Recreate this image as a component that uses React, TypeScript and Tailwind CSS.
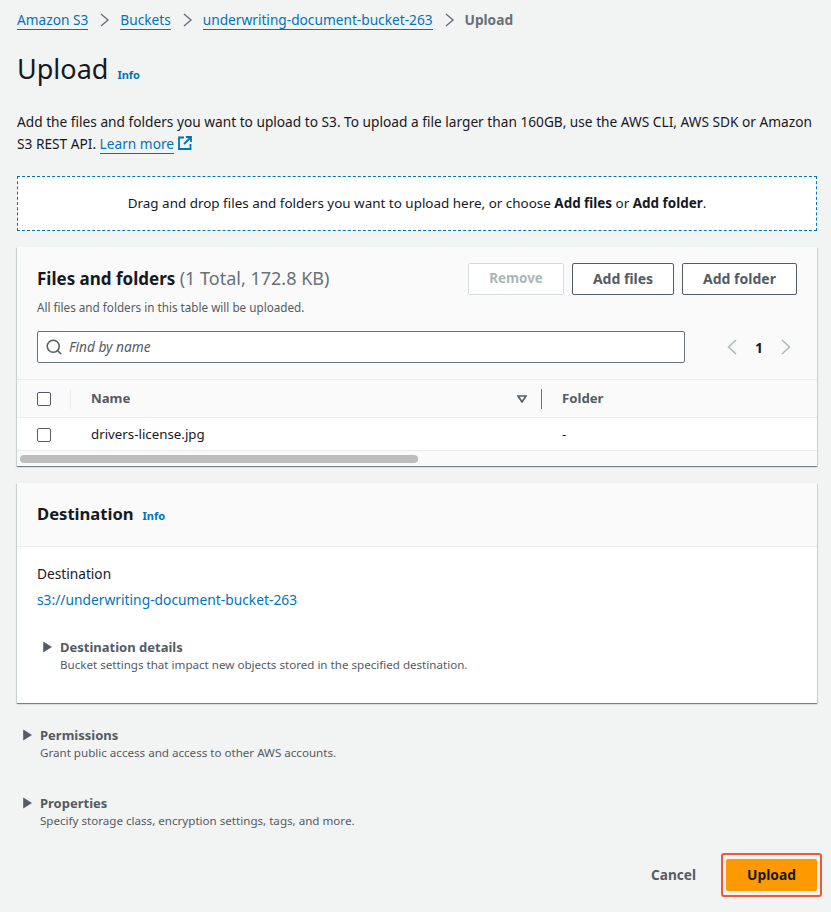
import { Search } from 'lucide-react';

const Chevron = ({ left, className }: { left?: boolean; className: string }) => (
  <svg width="10" height="16" viewBox="0 0 10 16" fill="none" stroke="currentColor" strokeWidth="1.4" className={`shrink-0 ${className}`}>
    <path d={left ? 'M9 1 L1.5 8 L9 15' : 'M1 1 L8.5 8 L1 15'} />
  </svg>
);

const Crumb = ({ label }: { label: string }) => (
  <>
    <a className="border-b border-[#0073bb] leading-[18px] text-[#0073bb]">{label}</a>
    <svg width="10" height="14" viewBox="0 0 10 14" fill="none" stroke="#687078" strokeWidth="1.4" className="ml-[2px] shrink-0">
      <path d="M1 1 L8 7 L1 13" />
    </svg>
  </>
);

const Caret = () => (
  <svg width="10" height="12" viewBox="0 0 10 12" className="shrink-0 fill-[#545b64]">
    <path d="M0.5 1 L8.5 6 L0.5 11 Z" stroke="#545b64" strokeWidth="0.6" strokeLinejoin="round" />
  </svg>
);

const Disclosure = ({ title, text }: { title: string; text: string }) => (
  <div className="flex items-start">
    <div className="flex h-[20px] w-[17px] items-center">
      <Caret />
    </div>
    <div>
      <div className="text-[13px] font-bold leading-[20px] text-[#545b64]">{title}</div>
      <div className="text-[11.6px] leading-[16px] text-[#545b64]">{text}</div>
    </div>
  </div>
);

const Checkbox = () => <div className="h-[14px] w-[14px] rounded-[2px] border border-[#545b64] bg-white" />;

const OutlineButton = ({ label, width }: { label: string; width: string }) => (
  <button className={`h-[32px] rounded-[2px] border border-[#545b64] bg-white pb-[2px] text-[14px] font-bold text-[#545b64] ${width}`}>
    {label}
  </button>
);

const App = () => {
  return (
    <div className="h-[912px] w-[831px] overflow-hidden bg-[#f2f3f3] px-[17px] pt-[11px] font-['Noto_Sans',sans-serif] text-[13.7px] text-[#16191f]">
      {/* breadcrumb */}
      <div className="flex h-[18px] items-center gap-[10px] text-[13.7px]">
        <Crumb label="Amazon S3" />
        <Crumb label="Buckets" />
        <Crumb label="underwriting-document-bucket-263" />
        <span className="font-bold text-[#687078]">Upload</span>
      </div>

      <div className="mt-[20px] flex items-baseline gap-[9px]">
        <h1 className="text-[27px] leading-[40px]">Upload</h1>
        <a className="text-[11px] font-bold text-[#0073bb]">Info</a>
      </div>

      <p className="mt-[22px] w-[800px] leading-[22px]">
        Add the files and folders you want to upload to S3. To upload a file larger than 160GB, use the AWS CLI, AWS SDK or Amazon S3 REST API.{' '}
        <a className="border-b border-[#0073bb] text-[#0073bb]">Learn more</a>
        <svg width="14" height="14" viewBox="0 0 14 14" fill="none" stroke="#0073bb" strokeWidth="1.8" className="ml-[4px] inline-block align-[-1px]">
          <path d="M6 1.5 H1 V13 H12.5 V8" />
          <path d="M8 1 H13 V6 M13 1 L6 8" />
        </svg>
      </p>

      <div className="mt-[21px] flex h-[55px] w-[800px] items-center justify-center border border-dashed border-[#0073bb] bg-white text-[13.45px]">
        <span>
          Drag and drop files and folders you want to upload here, or choose <b>Add files</b> or <b>Add folder</b>.
        </span>
      </div>

      {/* files table */}
      <section className="mt-[16px] h-[219px] w-[800px] overflow-hidden bg-[#fafafa] shadow-[0_1px_1px_0_rgba(0,28,36,0.4),1px_1px_1px_0_rgba(0,28,36,0.1),-1px_1px_1px_0_rgba(0,28,36,0.1)]">
        <div className="flex items-start justify-between px-[20px] pt-[16px]">
          <div>
            <h2 className="text-[17px] font-bold leading-[30px]">
              Files and folders <span className="text-[18px] font-normal text-[#687078]">(1 Total, 172.8 KB)</span>
            </h2>
            <div className="mt-[5px] text-[11.7px] leading-[16px] text-[#545b64]">All files and folders in this table will be uploaded.</div>
          </div>
          <div className="flex gap-[8px]">
            <button className="h-[32px] w-[96px] rounded-[2px] border border-[#d5dbdb] bg-white pb-[2px] text-[13.4px] font-bold text-[#aab7b8]">Remove</button>
            <OutlineButton label="Add files" width="w-[102px]" />
            <OutlineButton label="Add folder" width="w-[115px]" />
          </div>
        </div>

        <div className="mt-[16px] flex items-center px-[20px]">
          <div className="flex h-[32px] w-[648px] items-center gap-[6px] rounded-[2px] border border-[#687078] bg-white px-[7px]">
            <Search size={18} strokeWidth={2} className="text-[#545b64]" />
            <span className="italic text-[#545b64]">Find by name</span>
          </div>
          <div className="ml-[42px] flex items-center gap-[18px]">
            <Chevron left className="text-[#aab7b8]" />
            <span className="text-[14px] font-bold">1</span>
            <Chevron className="text-[#aab7b8]" />
          </div>
        </div>

        <div className="mt-[16px] flex h-[39px] items-center border-y border-[#eaeded] pt-[1px] text-[13.2px] font-bold text-[#545b64]">
          <div className="flex w-[54px] items-center justify-between pl-[20px]">
            <Checkbox />
            <div className="h-[20px] w-px bg-[#eaeded]" />
          </div>
          <div className="flex w-[471px] items-center justify-between pl-[20px]">
            <span>Name</span>
            <div className="flex items-center gap-[14px]">
              <svg width="10" height="8" viewBox="0 0 10 8" fill="none" stroke="#545b64" strokeWidth="1.6">
                <path d="M1 1 H9 L5 7 Z" />
              </svg>
              <div className="h-[20px] w-px bg-[#687078]" />
            </div>
          </div>
          <div className="pl-[20px]">Folder</div>
        </div>

        <div className="flex h-[33px] items-center border-b border-[#eaeded] bg-white pt-[2px] text-[13.3px]">
          <div className="w-[54px] pl-[20px]">
            <Checkbox />
          </div>
          <div className="w-[471px] pl-[20px]">drivers-license.jpg</div>
          <div className="pl-[20px]">-</div>
        </div>

        <div className="ml-[3px] mt-[4px] h-[8px] w-[398px] rounded-full bg-[#bdbdbd]" />
      </section>

      {/* destination */}
      <section className="mt-[17px] h-[220px] w-[800px] bg-white shadow-[0_1px_1px_0_rgba(0,28,36,0.4),1px_1px_1px_0_rgba(0,28,36,0.1),-1px_1px_1px_0_rgba(0,28,36,0.1)]">
        <div className="flex h-[64px] items-center gap-[9px] border-b border-[#eaeded] bg-[#fafafa] px-[20px]">
          <h2 className="text-[16.6px] font-bold">Destination</h2>
          <a className="mt-[3px] text-[11px] font-bold text-[#0073bb]">Info</a>
        </div>
        <div className="px-[20px] pt-[16px]">
          <div className="leading-[22px]">Destination</div>
          <a className="mt-[4px] block text-[13.8px] leading-[22px] text-[#0073bb]">s3://underwriting-document-bucket-263</a>
          <div className="ml-[6px] mt-[26px]">
            <Disclosure title="Destination details" text="Bucket settings that impact new objects stored in the specified destination." />
          </div>
        </div>
      </section>

      <div className="ml-[6px] mt-[22px] flex flex-col gap-[32px]">
        <Disclosure title="Permissions" text="Grant public access and access to other AWS accounts." />
        <Disclosure title="Properties" text="Specify storage class, encryption settings, tags, and more." />
      </div>

      <div className="mt-[24px] flex w-[805px] items-center justify-end gap-[25px]">
        <span className="text-[13.6px] font-bold text-[#545b64]">Cancel</span>
        <div className="rounded-[3px] border-2 border-[#f0583c] px-[3px] py-[4px]">
          <button className="h-[32px] w-[91px] rounded-[2px] bg-[#ff9900] text-[13.8px] font-bold">Upload</button>
        </div>
      </div>
    </div>
  );
};

export default App;
